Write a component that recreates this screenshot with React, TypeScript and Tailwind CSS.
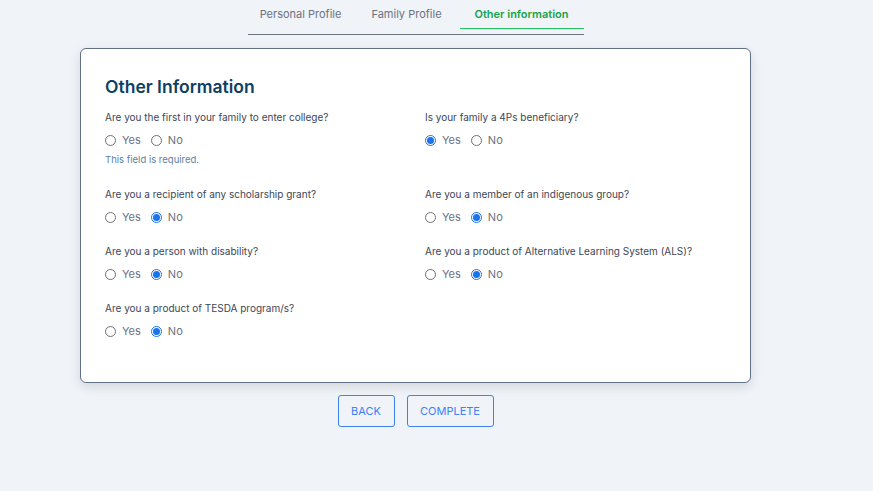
import React from 'react'

type Question = {
  label: string
  value: 'yes' | 'no' | null
  error?: string
}

const rows: [Question, Question | null][] = [
  [
    { label: 'Are you the first in your family to enter college?', value: null, error: 'This field is required.' },
    { label: 'Is your family a 4Ps beneficiary?', value: 'yes' },
  ],
  [
    { label: 'Are you a recipient of any scholarship grant?', value: 'no' },
    { label: 'Are you a member of an indigenous group?', value: 'no' },
  ],
  [
    { label: 'Are you a person with disability?', value: 'no' },
    { label: 'Are you a product of Alternative Learning System (ALS)?', value: 'no' },
  ],
  [{ label: 'Are you a product of TESDA program/s?', value: 'no' }, null],
]

function Radio({ checked, label }: { checked: boolean; label: string }) {
  return (
    <label className="flex items-center gap-[6px]">
      {checked ? (
        <span className="flex h-[11px] w-[11px] items-center justify-center rounded-full border border-[#1a73e8] bg-white">
          <span className="h-[7px] w-[7px] rounded-full bg-[#1a73e8]" />
        </span>
      ) : (
        <span className="h-[11px] w-[11px] rounded-full border border-[#707070] bg-white" />
      )}
      <span>{label}</span>
    </label>
  )
}

function QuestionBlock({ q }: { q: Question }) {
  return (
    <div className="flex flex-col">
      <p className="text-[10px] leading-4 text-[#3c4657]">{q.label}</p>
      <div className="mt-[7px] flex h-4 items-center gap-[10px] text-[11px] leading-4 text-[#6b7280]">
        <Radio checked={q.value === 'yes'} label="Yes" />
        <Radio checked={q.value === 'no'} label="No" />
      </div>
      {q.error && <p className="mt-[4px] text-[9.5px] leading-4 text-[#5b7fa3]">{q.error}</p>}
    </div>
  )
}

export default function App() {
  return (
    <div className="min-h-screen bg-[#f0f3f8] pl-[80px] font-['Inter',sans-serif]">
      <div className="flex w-[671px] flex-col items-center">
        <div className="flex w-[336px] gap-[6px] whitespace-nowrap border-b-[1.5px] border-[#6b7280] pb-[5px] pt-[5px] text-[11px]">
          <div className="h-[24px] w-[106px] text-center leading-[18px] text-[#6b7280]">Personal Profile</div>
          <div className="h-[24px] w-[94px] text-center leading-[18px] text-[#6b7280]">Family Profile</div>
          <div className="h-[24px] flex-1 border-b-[1.5px] border-[#22c55e] text-center font-semibold leading-[18px] text-[#16a34a]">
            Other information
          </div>
        </div>

        <div className="mt-[13px] w-full rounded-md border border-[#5f7088] bg-white px-[24px] pb-[43px] pt-[26px] shadow-[0_4px_12px_rgba(0,0,0,0.12)]">
          <h2 className="mb-[10px] text-[17.5px] font-semibold leading-6 text-[#0d3f63]">Other Information</h2>
          <div className="grid grid-cols-[320px_1fr] gap-y-[18px]">
            {rows.map(([left, right], i) => (
              <React.Fragment key={i}>
                <QuestionBlock q={left} />
                {right ? <QuestionBlock q={right} /> : <div />}
              </React.Fragment>
            ))}
          </div>
        </div>

        <div className="mt-[12px] flex gap-[12px] text-[11px] text-[#3b82f6]">
          <button className="h-[32px] w-[57px] rounded-[3px] border border-[#3b82f6]">BACK</button>
          <button className="h-[32px] w-[87px] rounded-[3px] border border-[#3b82f6]">COMPLETE</button>
        </div>
      </div>
    </div>
  )
}
